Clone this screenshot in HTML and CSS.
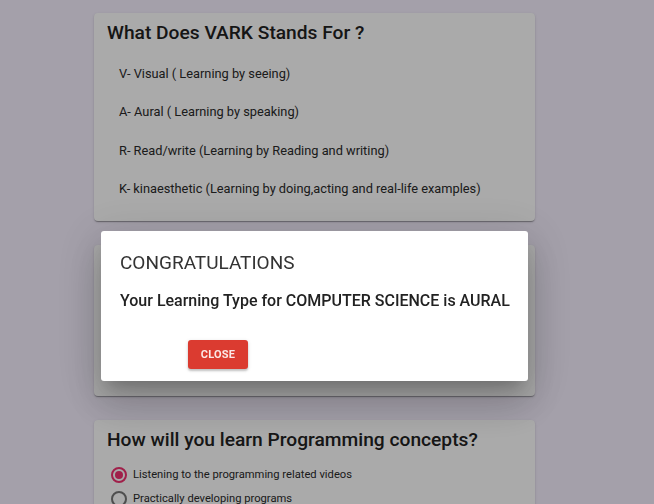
FILE: index.html
```html
<!DOCTYPE html>
<html lang="en">
<head>
<meta charset="utf-8">
<title>VARK Learning Style</title>
<link rel="stylesheet" href="styles.css">
</head>
<body>
<main class="page">
  <section class="card">
    <h2 class="card-title">What Does VARK Stands For ?</h2>
    <ul class="vark-list">
      <li>V- Visual ( Learning by seeing)</li>
      <li>A- Aural ( Learning by speaking)</li>
      <li>R- Read/write (Learning by Reading and writing)</li>
      <li>K- kinaesthetic (Learning by doing,acting and real-life examples)</li>
    </ul>
  </section>

  <section class="card card-hidden" aria-hidden="true"></section>

  <section class="card">
    <h2 class="card-title">How will you learn Programming concepts?</h2>
    <div class="options">
      <label class="option"><span class="radio checked"></span>Listening to the programming related videos</label>
      <label class="option"><span class="radio"></span>Practically developing programs</label>
    </div>
  </section>
</main>

<div class="backdrop"></div>
<div class="dialog" role="dialog">
  <h2 class="dialog-title">CONGRATULATIONS</h2>
  <p class="dialog-text">Your Learning Type for COMPUTER SCIENCE is AURAL</p>
  <div class="dialog-actions">
    <button class="btn-close" type="button">CLOSE</button>
  </div>
</div>
</body>
</html>
```

FILE: styles.css
```css
html, body {
  margin: 0;
  padding: 0;
}

body {
  background: #f6f0ff;
  font-family: Roboto, "Liberation Sans", Arial, sans-serif;
  color: rgba(0, 0, 0, 0.87);
  height: 504px;
  overflow: hidden;
}

.page {
  width: 441px;
  margin-left: 94px;
  padding-top: 13px;
  display: flex;
  flex-direction: column;
  gap: 24px;
}

.card {
  background: #ffffff;
  border-radius: 4px;
  padding: 8px 13px 12px 13px;
  box-shadow: 0 2px 1px -1px rgba(0, 0, 0, 0.2), 0 1px 1px 0 rgba(0, 0, 0, 0.14), 0 1px 3px 0 rgba(0, 0, 0, 0.12);
}

.card-hidden {
  box-sizing: border-box;
  height: 151px;
}

.card-title {
  margin: 0;
  font-size: 19.2px;
  line-height: 24px;
  font-weight: 500;
  color: #222222;
}

.vark-list {
  list-style: none;
  margin: 10px 0 0 0;
  padding: 0 0 0 12px;
}

.vark-list li {
  font-size: 12.8px;
  line-height: 38.4px;
  height: 38.4px;
  color: #2a2a2a;
}

.options {
  margin-top: 11px;
  display: flex;
  flex-direction: column;
  padding-left: 4px;
}

.option {
  display: flex;
  align-items: center;
  height: 24px;
  font-size: 11.2px;
  color: #2a2a2a;
}

.radio {
  box-sizing: border-box;
  width: 16px;
  height: 16px;
  border: 2px solid rgba(0, 0, 0, 0.54);
  border-radius: 50%;
  margin-right: 6px;
  display: flex;
  align-items: center;
  justify-content: center;
  flex: none;
}

.radio.checked {
  border-color: #f0306f;
}

.radio.checked::after {
  content: "";
  width: 8px;
  height: 8px;
  border-radius: 50%;
  background: #f0306f;
}

.backdrop {
  position: fixed;
  inset: 0;
  background: rgba(0, 0, 0, 0.333);
}

.dialog {
  position: fixed;
  left: 101px;
  top: 231px;
  width: 427px;
  height: 150px;
  box-sizing: border-box;
  background: #ffffff;
  border-radius: 3px;
  padding: 20px 19px 0 19px;
  box-shadow: 0 11px 15px -7px rgba(0, 0, 0, 0.2), 0 24px 38px 3px rgba(0, 0, 0, 0.14), 0 9px 46px 8px rgba(0, 0, 0, 0.12);
}

.dialog-title {
  margin: 0;
  font-size: 19px;
  line-height: 24px;
  font-weight: 400;
  color: #333333;
}

.dialog-text {
  margin: 14px 0 0 0;
  font-size: 16px;
  line-height: 24px;
  font-weight: 500;
  color: #222222;
  white-space: nowrap;
}

.dialog-actions {
  display: flex;
  margin-top: 27px;
  padding-left: 68px;
}

.btn-close {
  width: 60px;
  height: 29px;
  border: none;
  border-radius: 3px;
  background: #db3b30;
  color: rgba(255, 255, 255, 0.88);
  font-family: Roboto, "Liberation Sans", Arial, sans-serif;
  font-size: 11px;
  font-weight: 700;
  letter-spacing: 0.2px;
  padding: 0;
  box-shadow: 0 2px 2px 0 rgba(0, 0, 0, 0.18), 0 1px 4px 0 rgba(0, 0, 0, 0.12);
}
```
